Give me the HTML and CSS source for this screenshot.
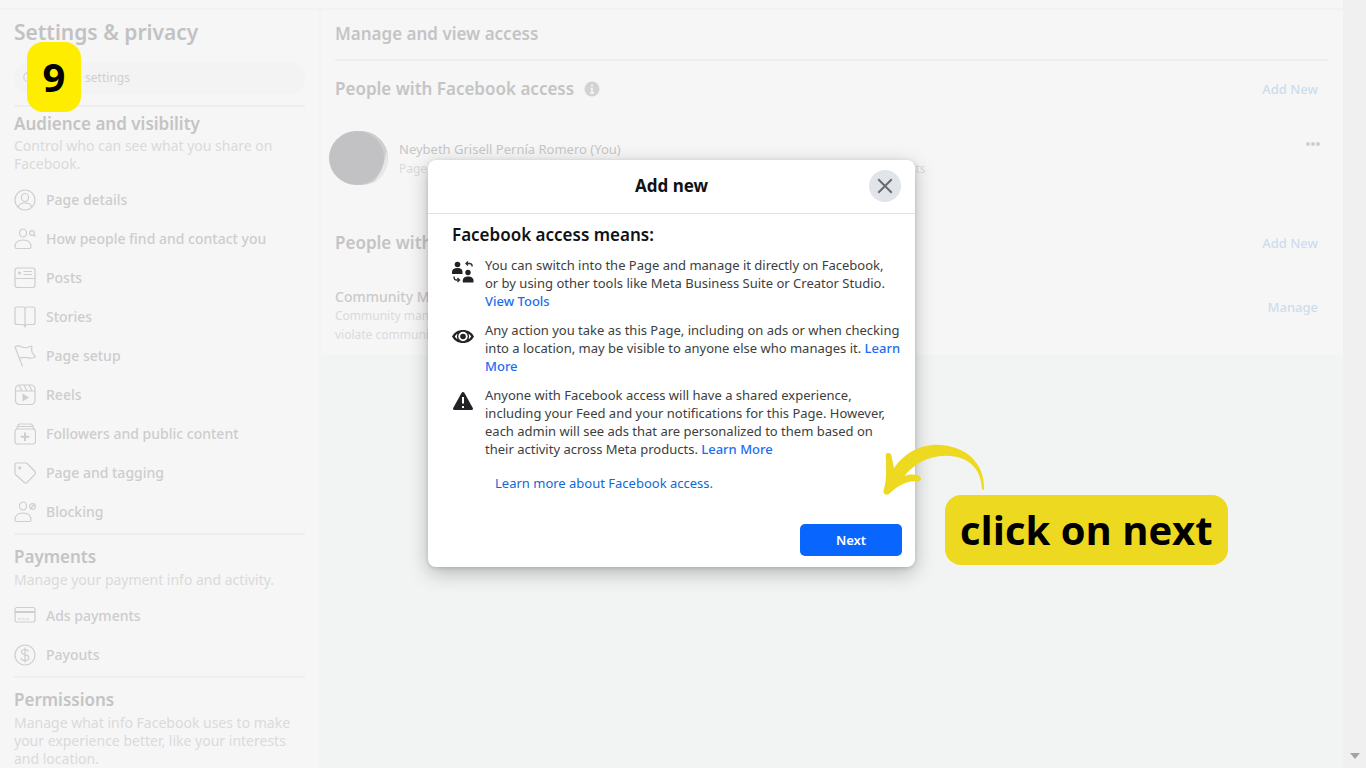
FILE: index.html
```html
<!DOCTYPE html>
<html lang="en">
<head>
<meta charset="utf-8">
<meta name="viewport" content="width=device-width, initial-scale=1">
<title>Settings &amp; privacy</title>
<link rel="stylesheet" href="styles.css">
</head>
<body>
<div class="app">
  <div class="page">
    <div class="topbar"></div>
    <div class="columns">
      <aside class="sidebar">
        <h1 class="sidebar-title">Settings &amp; privacy</h1>
        <label class="search">
          <svg class="search-icon" viewBox="0 0 16 16"><circle cx="7" cy="7" r="5"/><path d="M11 11l4 4"/></svg>
          <input class="search-input" type="text" placeholder="Search settings" aria-label="Search settings">
        </label>
        <section class="group group-first">
          <h2 class="heading">Audience and visibility</h2>
          <p class="desc">Control who can see what you share on<br>Facebook.</p>
          <nav class="menu">
            <a class="item" href="#"><svg class="icon" viewBox="0 0 22 22"><circle cx="11" cy="11" r="10"/><ellipse cx="11" cy="8.500" rx="3.500" ry="4"/><path d="M4.500 18c.3-3 2.500-4 6.500-4s6.200 1 6.500 4"/></svg>Page details</a>
            <a class="item" href="#"><svg class="icon" viewBox="0 0 22 22"><ellipse cx="9" cy="5" rx="3.500" ry="4"/><path d="M1 19c0-5 3-7 8-7s8 2 8 7c0 1-.5 1.500-1.500 1.500h-13C1.500 20.500 1 20 1 19z"/><circle cx="18" cy="5" r="2.300"/><path d="M20 7l1.500 1.500"/></svg>How people find and contact you</a>
            <a class="item" href="#"><svg class="icon" viewBox="0 0 22 22"><rect x="1" y="1" width="20" height="19.500" rx="2.500"/><path d="M1 11.500h20M9.500 4.500H18M9.500 7.500H18"/><circle class="fill" cx="5.500" cy="6" r="1.600"/></svg>Posts</a>
            <a class="item" href="#"><svg class="icon" viewBox="0 0 22 22"><path d="M11 20.500c-.5-1.500-1.500-2-3-2H3c-1.500 0-2-.5-2-2V3c0-1.500.5-2 2-2h5.500C10 1 11 1.500 11 3c0-1.500 1-2 2.500-2H19c1.500 0 2 .5 2 2v13.500c0 1.500-.5 2-2 2h-5c-1.500 0-2.500.5-3 2zM11 3v17.500"/></svg>Stories</a>
            <a class="item" href="#"><svg class="icon" viewBox="0 0 22 22"><path d="M8.500 21.500L1 2c2-1.500 4-1.500 6-.5 4 2 6 1.500 10-.5.8 0 1 .5.800 1.500-.5 4 0 5.500 3.200 8.500.4.700 0 1-1 1.500-3 1.500-5 .5-8 0-3-.5-4.500-.3-6.500 1"/></svg>Page setup</a>
            <a class="item" href="#"><svg class="icon" viewBox="0 0 22 22"><rect x="1.500" y="1" width="19.500" height="19.500" rx="4"/><path d="M1.500 7H21M5 1.500L8 7M10 1l3 6M15 1l3 6"/><path class="fill" d="M8.500 9.500v8l6.500-4z"/></svg>Reels</a>
            <a class="item" href="#"><svg class="icon" viewBox="0 0 22 22"><rect x="1" y="6" width="20.500" height="15" rx="2.500"/><path d="M2.500 6l1-2.500h15.500L20 6M4 3.500c0-2 .5-2.500 2-2.500h10.500C18 1 18.500 1.500 19 3.500"/><path class="heavy" d="M11 9.500v8.500M6.700 13.700h8.600"/></svg>Followers and public content</a>
            <a class="item" href="#"><svg class="icon" viewBox="0 0 22 22"><path d="M1 3c0-1.500.5-2 2-2h8.500c1 0 1.500.3 2.200 1l7.300 7.500c.7 1 .7 1.800 0 2.600L13 20.500c-1 .8-1.800.8-2.600 0L2 13c-.7-.8-1-1.200-1-2z"/><circle class="fill" cx="5.800" cy="5.800" r="1.600"/></svg>Page and tagging</a>
            <a class="item" href="#"><svg class="icon" viewBox="0 0 22 22"><ellipse cx="9" cy="5" rx="3.500" ry="4"/><path d="M1 19c0-5 3-7 8-7s8 2 8 7c0 1-.5 1.500-1.500 1.500h-13C1.500 20.500 1 20 1 19z"/><circle cx="18.500" cy="5.500" r="2.800"/><path d="M16.700 7.500l3.600-4"/></svg>Blocking</a>
          </nav>
        </section>
        <section class="group">
          <h2 class="heading">Payments</h2>
          <p class="desc">Manage your payment info and activity.</p>
          <nav class="menu">
            <a class="item" href="#"><svg class="icon" viewBox="0 0 22 22"><rect x="1" y="2.500" width="20" height="14.500" rx="2"/><path class="heavy" d="M1 7h20"/><path d="M4 14h12" stroke-dasharray="3 1"/></svg>Ads payments</a>
            <a class="item" href="#"><svg class="icon" viewBox="0 0 22 22"><circle cx="11" cy="11" r="10"/><path d="M14.500 7.500C14 6 12.800 5.500 11 5.500c-2 0-3.500 1-3.500 2.600C7.500 12 15 9.700 15 13.800c0 1.700-1.800 2.700-4 2.700s-3.700-1-4-2.700M11 3.500v15"/></svg>Payouts</a>
          </nav>
        </section>
        <section class="group">
          <h2 class="heading">Permissions</h2>
          <p class="desc">Manage what info Facebook uses to make<br>your experience better, like your interests<br>and location.</p>
        </section>
      </aside>
      <main class="main">
        <div class="panel">
          <h2 class="panel-title">Manage and view access</h2>
          <div class="row">
            <h3 class="heading">People with Facebook access</h3>
            <svg class="info" viewBox="0 0 16 16"><circle cx="8" cy="8" r="7.500"/><path d="M8 3.500v2M6.500 7.500H8V12M6 12h4"/></svg>
            <a class="action" href="#">Add New</a>
          </div>
          <div class="person">
            <svg class="avatar" viewBox="0 0 60 54"><ellipse class="avatar-back" cx="32" cy="27" rx="27" ry="27"/><path class="avatar-shine" d="M58 20c3 15-3 27-15 33 6-7 12-16 14-31z"/><ellipse class="avatar-front" cx="27.500" cy="27" rx="27.500" ry="27"/></svg>
            <div class="person-text">
              <p class="name">Neybeth Grisell Pernía Romero (You)</p>
              <p class="small">Page access with full control • Content, Messages, Community activity, Ads, Links and Insights</p>
            </div>
            <button class="more" type="button" aria-label="More options"><svg class="dots" viewBox="0 0 16 6"><circle cx="3" cy="3" r="2"/><circle cx="8" cy="3" r="2"/><circle cx="13" cy="3" r="2"/></svg></button>
          </div>
          <div class="row">
            <h3 class="heading">People with task access</h3>
            <a class="action" href="#">Add New</a>
          </div>
          <div class="community">
            <div>
              <p class="community-name">Community Managers</p>
              <p class="small">Community managers can moderate chats that<br>violate community standards.</p>
            </div>
            <a class="action manage" href="#">Manage</a>
          </div>
        </div>
      </main>
    </div>
  </div>
  <div class="scrollbar"><svg class="scroll-arrow" viewBox="0 0 10 6"><path d="M0 0h10L5 6z"/></svg></div>
</div>

<div class="overlay">
  <div class="dialog" role="dialog" aria-labelledby="dialog-title">
    <header class="dialog-header">
      <h2 class="dialog-title" id="dialog-title">Add new</h2>
      <button class="close" type="button" aria-label="Close"><svg class="close-icon" viewBox="0 0 16 16"><path d="M2 2l12 12M14 2L2 14"/></svg></button>
    </header>
    <div class="dialog-body">
      <h3 class="dialog-heading">Facebook access means:</h3>
      <ul class="points">
        <li class="point">
          <svg class="point-icon" viewBox="0 0 22 22"><circle cx="5.500" cy="3.500" r="2.800"/><path d="M0 13v-2c0-2.500 2-4 5.500-4s5 1.500 5 4v2z"/><circle cx="16" cy="11.500" r="2.700"/><path d="M10.800 21.500v-2c0-2.500 2-4 5.200-4s5.500 1.500 5.500 4v2z"/><path class="line" d="M16 .5L14 2.500l2 2M14 2.500h3.500c2 0 2.700.8 2.700 3M2 15.500c0 2.500.5 3.500 2.500 3.500H7M5.500 17L7.500 19l-2 2"/></svg>
          <p>You can switch into the Page and manage it directly on Facebook,<br>or by using other tools like Meta Business Suite or Creator Studio.<br><a class="link" href="#">View Tools</a></p>
        </li>
        <li class="point">
          <svg class="point-icon" viewBox="0 0 22 22"><path d="M0 10.500C2.500 6 6.500 4 11 4s8.500 2 11 6.500C19.500 15 15.500 17 11 17S2.500 15 0 10.500z"/><circle class="gap" cx="11" cy="10.500" r="4.700"/><path class="gap" d="M2.800 10.500c.7-1.300 1.500-2 2.700-2.800-.7 1.800-.7 3.800 0 5.600-1.200-.8-2-1.500-2.700-2.800zm16.400 0c-.7-1.300-1.500-2-2.700-2.800.7 1.800.7 3.800 0 5.600 1.200-.8 2-1.500 2.700-2.800z"/><circle cx="11" cy="10.500" r="2.800"/></svg>
          <p>Any action you take as this Page, including on ads or when checking<br>into a location, may be visible to anyone else who manages it. <a class="link" href="#">Learn<br>More</a></p>
        </li>
        <li class="point">
          <svg class="point-icon" viewBox="0 0 22 22"><path d="M9.500 2c.8-1.300 2.200-1.300 3 0l8.300 15c.5 1.200 0 2-1.300 2h-17C1.200 19 .7 18.200 1.200 17z"/><path class="mark" d="M11 6v6.500M11 15v2"/></svg>
          <p>Anyone with Facebook access will have a shared experience,<br>including your Feed and your notifications for this Page. However,<br>each admin will see ads that are personalized to them based on<br>their activity across Meta products. <a class="link" href="#">Learn More</a></p>
        </li>
      </ul>
      <a class="about" href="#">Learn more about Facebook access.</a>
    </div>
    <footer class="dialog-footer"><button class="next" type="button">Next</button></footer>
  </div>
</div>

<div class="step">9</div>
<svg class="arrow" viewBox="300 30 330 180"><path d="M612 178Q608 182 606 177C604 120 570 78 498 77C440 77 400 105 374 137C390 133 400 132 414 136Q426 142 422 150Q418 156 404 154C375 155 350 170 326 193Q312 198 310 184C322 150 318 110 317 74Q318 68 326 69Q334 70 334 76L342 114C370 75 410 44 475 44C560 48 615 100 612 178Z"/></svg>
<div class="callout">click on next</div>
</body>
</html>
```

FILE: styles.css
```css
* { box-sizing: border-box; }
body, h1, h2, h3, p, ul { margin: 0; padding: 0; }
body {
  height: 100vh;
  overflow: hidden;
  background: #f2f4f4;
  color: #c9c9ca;
  font-family: "Noto Sans", "Open Sans", sans-serif;
  font-size: 13px;
  line-height: 18px;
}
a { text-decoration: none; color: inherit; }
button { border: 0; padding: 0; background: none; font-family: inherit; cursor: pointer; }
svg { display: block; flex: none; }

.app { display: flex; height: 100vh; overflow: hidden; }
.page { flex: 1; display: flex; flex-direction: column; min-width: 0; }
.topbar { flex: none; height: 10px; background: #f6f6f6; border-bottom: 2px solid #f2f2f2; }
.columns { flex: 1; display: flex; min-height: 0; }
.scrollbar { display: flex; align-items: flex-end; justify-content: center; width: 23px; padding-bottom: 9px; background: #f0f0f0; }
.scroll-arrow { width: 10px; height: 6px; fill: #a3a3a3; }

.sidebar { flex: none; width: 321px; padding: 8px 14px 0 14px; background: #f6f6f6; border-right: 2px solid #f2f3f3; overflow: hidden; }
.sidebar-title { font-size: 21px; font-weight: 600; line-height: 28px; color: #c2c2c3; }
.search { display: flex; align-items: center; gap: 8px; height: 32px; margin: 16px 0 11px; padding: 0 8px; border-radius: 16px; background: #f3f3f3; }
.search-icon { width: 14px; height: 14px; fill: none; stroke: #d6d6d6; stroke-width: 1.5; }
.search-input { flex: 1; min-width: 0; border: 0; padding: 0; background: none; font: inherit; font-size: 12px; outline: 0; }
.search-input::placeholder { color: #d0d0d0; opacity: 1; }
.group { padding-top: 11px; border-top: 2px solid #eeeeee; }
.group-first { padding-top: 6px; }
.heading { font-size: 17px; font-weight: 600; line-height: 22px; color: #c4c4c5; }
.desc { font-size: 14px; line-height: 18px; color: #dadadb; margin-top: 3px; }
.group-first .desc { margin-top: 2px; }
.menu { padding: 7px 0 2px; }
.item { display: flex; align-items: center; gap: 10px; height: 39px; font-size: 14px; font-weight: 500; color: #cdcdcd; }
.icon { width: 22px; height: 22px; fill: none; stroke: #cecece; stroke-width: 1.2; }
.icon .fill { fill: #cecece; stroke: none; }
.icon .heavy { stroke-width: 2; }

.main { flex: 1; min-width: 0; }
.panel { height: 345px; padding: 0 15px 0 14px; background: #f6f6f6; }
.panel-title { height: 51px; padding-top: 13px; font-size: 17px; font-weight: 600; line-height: 22px; color: #c4c4c5; border-bottom: 2px solid #efefef; }
.row { display: flex; align-items: center; gap: 10px; height: 56px; padding-right: 10px; }
.info { width: 16px; height: 16px; fill: #d3d3d4; stroke: none; }
.info path { fill: none; stroke: #f6f6f6; stroke-width: 1.5; }
.action { margin-left: auto; font-weight: 500; color: #cddded; }
.person { display: flex; gap: 10px; height: 98px; margin-left: -6px; padding: 14px 7px 0 0; }
.avatar { width: 60px; height: 54px; }
.avatar-back { fill: #cdcfcf; }
.avatar-shine { fill: #e4e8e8; }
.avatar-front { fill: #c2c2c4; }
.person-text { padding-top: 9px; }
.name { margin-bottom: 1px; line-height: 18px; color: #c6c6c7; }
.small { font-size: 12px; line-height: 19px; color: #dadadb; }
.more { align-self: flex-start; margin: 10px 0 0 auto; }
.dots { width: 16px; height: 6px; fill: #cfcfd0; }
.community { display: flex; align-items: flex-start; padding: 17px 10px 0 0; }
.community-name { font-size: 14px; font-weight: 500; line-height: 18px; color: #cacacb; }
.manage { margin-top: 10px; }

.overlay { position: absolute; inset: 160px 23px auto 0; display: flex; justify-content: center; }
.dialog { width: 487px; background: #fff; border-radius: 8px; box-shadow: 0 6px 20px rgba(0, 0, 0, .25), 0 1px 4px rgba(0, 0, 0, .15); color: #3c3e40; }
.dialog-header { position: relative; display: flex; align-items: center; justify-content: center; height: 54px; padding-bottom: 2px; border-bottom: 1px solid #dfe0e2; }
.dialog-title { font-size: 17px; line-height: 22px; color: #111213; }
.close { position: absolute; right: 14px; top: 10px; display: grid; place-items: center; width: 32px; height: 32px; border-radius: 50%; background: #e1e4e8; }
.close-icon { width: 18px; height: 18px; fill: none; stroke: #686c72; stroke-width: 1.8; }
.dialog-body { padding: 10px 16px 0 24px; }
.dialog-heading { font-size: 17px; font-weight: 600; line-height: 22px; color: #111213; }
.points { display: flex; flex-direction: column; gap: 11px; margin-top: 10px; list-style: none; }
.point { display: flex; gap: 11px; white-space: nowrap; }
.point-icon { width: 22px; height: 22px; margin-top: 5px; fill: #202225; }
.point-icon .line { fill: none; stroke: #303236; stroke-width: 1.4; }
.point-icon .gap { fill: #fff; }
.point-icon .mark { fill: none; stroke: #fff; stroke-width: 2; }
.link { color: #1c6df2; font-weight: 500; }
.about { display: block; margin: 16px 0 0 43px; color: #1268d4; }
.dialog-footer { display: flex; justify-content: flex-end; padding: 32px 13px 11px; }
.next { width: 102px; height: 32px; border-radius: 5px; background: #0866ff; color: #fff; font-size: 13px; font-weight: 600; }

.step, .callout { position: absolute; display: grid; place-items: center; height: 70px; border-radius: 16px; color: #000; font-family: "Open Sans", "Noto Sans", sans-serif; font-size: 40px; font-weight: 700; line-height: 54px; white-space: nowrap; }
.step { left: 27px; top: 42px; width: 54px; background: #ffed00; }
.callout { left: 945px; top: 495px; padding: 0 15px; background: #ecd920; }
.arrow { position: absolute; left: 880px; top: 440px; width: 110px; height: 60px; fill: #ecd920; }
```
